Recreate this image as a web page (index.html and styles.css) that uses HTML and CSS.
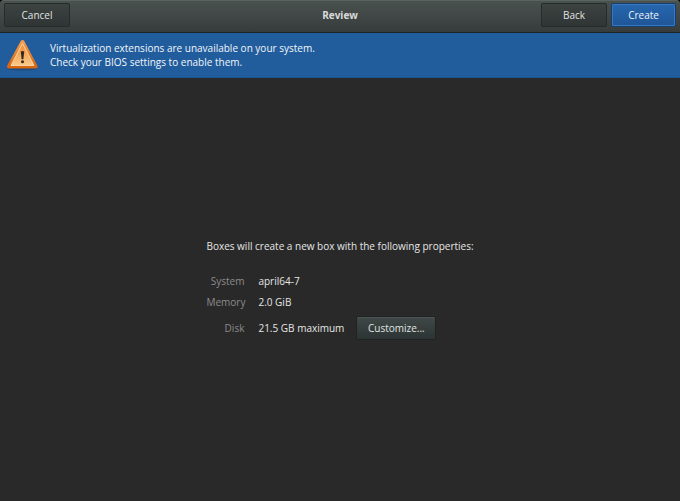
FILE: index.html
```html
<!DOCTYPE html>
<html lang="en">
<head>
  <meta charset="UTF-8" />
  <title>Review</title>
  <link rel="stylesheet" href="styles.css">
</head>
<body>

  <header class="toolbar">
    <div class="toolbar-side">
      <button type="button" class="btn">Cancel</button>
    </div>
    <h1 class="title">Review</h1>
    <div class="toolbar-side toolbar-end">
      <button type="button" class="btn">Back</button>
      <button type="button" class="btn btn-primary">Create</button>
    </div>
  </header>

  <div class="infobar" role="alert">
    <svg class="warning-icon" viewBox="0 0 32 32" aria-hidden="true">
      <defs>
        <linearGradient id="edge" x1="0" y1="0" x2="0" y2="1">
          <stop offset="0" stop-color="#f39a4c" />
          <stop offset="1" stop-color="#d9660f" />
        </linearGradient>
        <linearGradient id="fill" x1="0" y1="0" x2="0" y2="1">
          <stop offset="0" stop-color="#f08a35" />
          <stop offset="1" stop-color="#fbc988" />
        </linearGradient>
      </defs>
      <ellipse cx="16" cy="30" rx="15" ry="1.5" fill="#173f70" opacity="0.6" />
      <path d="M16.5 3 L29.5 27.5 H3 Z" fill="#e87a22" stroke="url(#edge)" stroke-width="4" stroke-linejoin="round" />
      <path d="M16.5 4.5 L28 26.5 H5 Z" fill="url(#fill)" stroke="#fbd3a4" stroke-width="1" stroke-linejoin="round" />
      <path d="M14.8 12.5 Q16.5 11.3 18.2 12.5 L17.4 20.3 H15.6 Z" fill="#33291f" />
      <circle cx="16.5" cy="22.8" r="1.5" fill="#33291f" />
    </svg>
    <p class="infobar-text">Virtualization extensions are unavailable on your system.<br />Check your BIOS settings to enable them.</p>
  </div>

  <main class="content">
    <div class="review">
      <p class="summary">Boxes will create a new box with the following properties:</p>
      <dl class="properties">
        <dt>System</dt>
        <dd>april64-7</dd>
        <dt>Memory</dt>
        <dd>2.0 GiB</dd>
        <dt>Disk</dt>
        <dd class="disk">21.5 GB maximum <button type="button" class="btn btn-customize">Customize...</button></dd>
      </dl>
    </div>
  </main>

</body>
</html>
```

FILE: styles.css
```css
* {
  box-sizing: border-box;
}

html {
  background: #000;
}

body {
  margin: 0;
  min-height: 100vh;
  display: flex;
  flex-direction: column;
  font-family: "Open Sans", "Noto Sans", sans-serif;
  font-size: 10px;
  font-weight: 600;
  line-height: 14px;
  color: #dadada;
  background: #292929;
  border-radius: 4px 4px 0 0;
}

h1, p, dl, dd {
  margin: 0;
}

/* header bar */
.toolbar {
  display: flex;
  align-items: center;
  padding: 3px 4px 5px;
  background: linear-gradient(#4a5250, #363c3b);
  border-bottom: 1px solid #1c2426;
  border-radius: 4px 4px 0 0;
  box-shadow: inset 0 1px #5b6361;
}

.toolbar-side {
  flex: 1;
  display: flex;
  gap: 4px;
}

.toolbar-end {
  justify-content: flex-end;
}

.title {
  font-size: 10px;
  font-weight: bold;
}

.btn {
  width: 66px;
  height: 24px;
  padding: 0;
  font: inherit;
  font-weight: 500;
  color: #e0e3e2;
  background: linear-gradient(#3c4341, #2f3534);
  border: 1px solid #252b2a;
  border-radius: 2px;
}

.btn-primary {
  width: 65px;
  color: #eef3f9;
  background: linear-gradient(#2667ae, #1f5597);
  border-color: #173e70;
  box-shadow: inset 0 0 0 1px #3878bd;
}

.btn-customize {
  width: 80px;
  background: linear-gradient(#404947, #2c3433);
  border-color: #1f2423;
  box-shadow: inset 0 1px #4b5452;
}

/* warning message */
.infobar {
  display: flex;
  align-items: center;
  gap: 12px;
  padding: 6px;
  background: #215d9c;
  border-bottom: 1px solid #1e5591;
}

.warning-icon {
  width: 32px;
  height: 32px;
}

.infobar-text {
  font-weight: 500;
  color: #f2f6fa;
}

/* box properties */
.content {
  flex: 1;
  display: flex;
  align-items: center;
  justify-content: center;
}

.summary {
  margin-bottom: 21px;
  font-weight: 500;
  color: #e6e6e6;
}

.properties {
  display: grid;
  grid-template-columns: 38px 1fr;
  align-items: center;
  gap: 7px 14px;
  font-weight: 500;
  color: #e6e6e6;
}

.properties dt {
  text-align: right;
  color: #8c8c8c;
}

.disk {
  display: flex;
  align-items: center;
  gap: 12px;
}
```
